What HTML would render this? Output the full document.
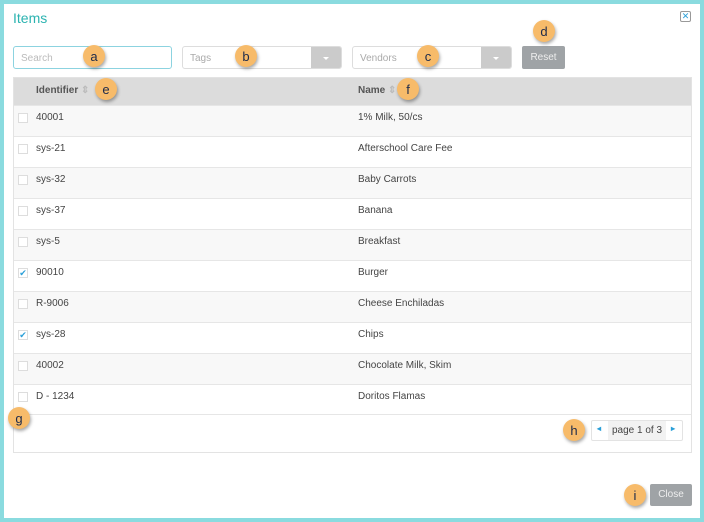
<!DOCTYPE html><html><head><style>
*{box-sizing:border-box;margin:0;padding:0}
body{width:704px;height:522px;background:#8adbdf;font-family:"Liberation Sans",sans-serif;position:relative;overflow:hidden}
.m{position:absolute;left:4px;top:4px;width:696px;height:514px;background:#fff}
.t{position:absolute;left:13px;top:10px;font-size:14px;color:#2bb3b0}
.x{position:absolute;left:680px;top:11px;width:11px;height:11px;border:1px solid #999;border-radius:2px;font-size:9px;line-height:9px;text-align:center;color:#2a9fd8}
.in{position:absolute;top:46px;height:23px;border:1px solid #ddd;border-radius:3px;font-size:10px;color:#aaa;padding:6px 7px}
.dd{position:absolute;right:0;top:0;bottom:0;width:30px;background:#cbcbcb;border-radius:0 2px 2px 0}
.dd:after{content:"";position:absolute;left:12px;top:10px;border:3px solid transparent;border-top-color:#fff}
.btn{position:absolute;background:#9fa3a6;color:#eee;font-size:10px;border-radius:2px;text-align:center}
.tb{position:absolute;left:13px;top:77px;width:679px;height:376px;border:1px solid #e3e3e3}
.hd{height:27px;background:#dcdcdc;font-size:10px;font-weight:bold;color:#555;position:relative}
.r{height:31px;border-top:1px solid #e6e6e6;position:relative;font-size:10px;color:#444}
.r:nth-child(even){background:#f8f8f8}
.c1{position:absolute;left:22px;top:6px}.c2{position:absolute;left:344px;top:6px}
.cb{position:absolute;left:4px;top:7px;width:10px;height:10px;border:1px solid #ddd;background:#fff;font-size:9px;line-height:8px;color:#2a9fd8;text-align:center}
.pg{position:absolute;left:591px;top:420px;width:92px;height:21px;border:1px solid #e3e3e3;border-radius:2px;font-size:10px;color:#444}
.pg span{position:absolute;left:16px;top:0;width:58px;height:19px;background:#f2f2f2;line-height:19px;text-align:center}
.b{position:absolute;width:22px;height:22px;margin:-11px 0 0 -11px;border-radius:50%;background:#f7bb6a;box-shadow:1px 2px 3px rgba(0,0,0,.35);color:#1d2a4a;font-size:13px;text-align:center;line-height:23px}
</style></head><body><div class="m"></div>
<div class="t">Items</div><div class="x">✕</div>
<div class="in" style="left:13px;width:159px;border-color:#8cd3e0;color:#bbb">Search</div>
<div class="in" style="left:182px;width:160px">Tags<div class="dd"></div></div>
<div class="in" style="left:352px;width:160px">Vendors<div class="dd"></div></div>
<div class="btn" style="left:522px;top:46px;width:43px;height:23px;line-height:23px">Reset</div>
<div class="tb"><div class="hd"><span class="c1" style="top:7px">Identifier <span style="color:#bbb">⇕</span></span><span class="c2" style="top:7px">Name <span style="color:#bbb">⇕</span></span></div>
<div class="r"><div class="cb"></div><span class="c1">40001</span><span class="c2">1% Milk, 50/cs</span></div>
<div class="r"><div class="cb"></div><span class="c1">sys-21</span><span class="c2">Afterschool Care Fee</span></div>
<div class="r"><div class="cb"></div><span class="c1">sys-32</span><span class="c2">Baby Carrots</span></div>
<div class="r"><div class="cb"></div><span class="c1">sys-37</span><span class="c2">Banana</span></div>
<div class="r"><div class="cb"></div><span class="c1">sys-5</span><span class="c2">Breakfast</span></div>
<div class="r"><div class="cb">✔</div><span class="c1">90010</span><span class="c2">Burger</span></div>
<div class="r"><div class="cb"></div><span class="c1">R-9006</span><span class="c2">Cheese Enchiladas</span></div>
<div class="r"><div class="cb">✔</div><span class="c1">sys-28</span><span class="c2">Chips</span></div>
<div class="r"><div class="cb"></div><span class="c1">40002</span><span class="c2">Chocolate Milk, Skim</span></div>
<div class="r" style="border-bottom:1px solid #e6e6e6"><div class="cb"></div><span class="c1">D - 1234</span><span class="c2">Doritos Flamas</span></div>
</div>
<div class="pg"><b style="position:absolute;left:5px;top:3px;color:#2a9fd8;font-size:8px">◂</b><span>page 1 of 3</span><b style="position:absolute;left:79px;top:3px;color:#2a9fd8;font-size:8px">▸</b></div>
<div class="btn" style="left:650px;top:484px;width:42px;height:22px;line-height:22px">Close</div>
<div class="b" style="left:94px;top:56px">a</div><div class="b" style="left:246px;top:56px">b</div><div class="b" style="left:428px;top:56px">c</div><div class="b" style="left:544px;top:31px">d</div><div class="b" style="left:106px;top:89px">e</div><div class="b" style="left:408px;top:89px">f</div><div class="b" style="left:19px;top:418px">g</div><div class="b" style="left:574px;top:430px">h</div><div class="b" style="left:635px;top:495px">i</div>
</body></html>
